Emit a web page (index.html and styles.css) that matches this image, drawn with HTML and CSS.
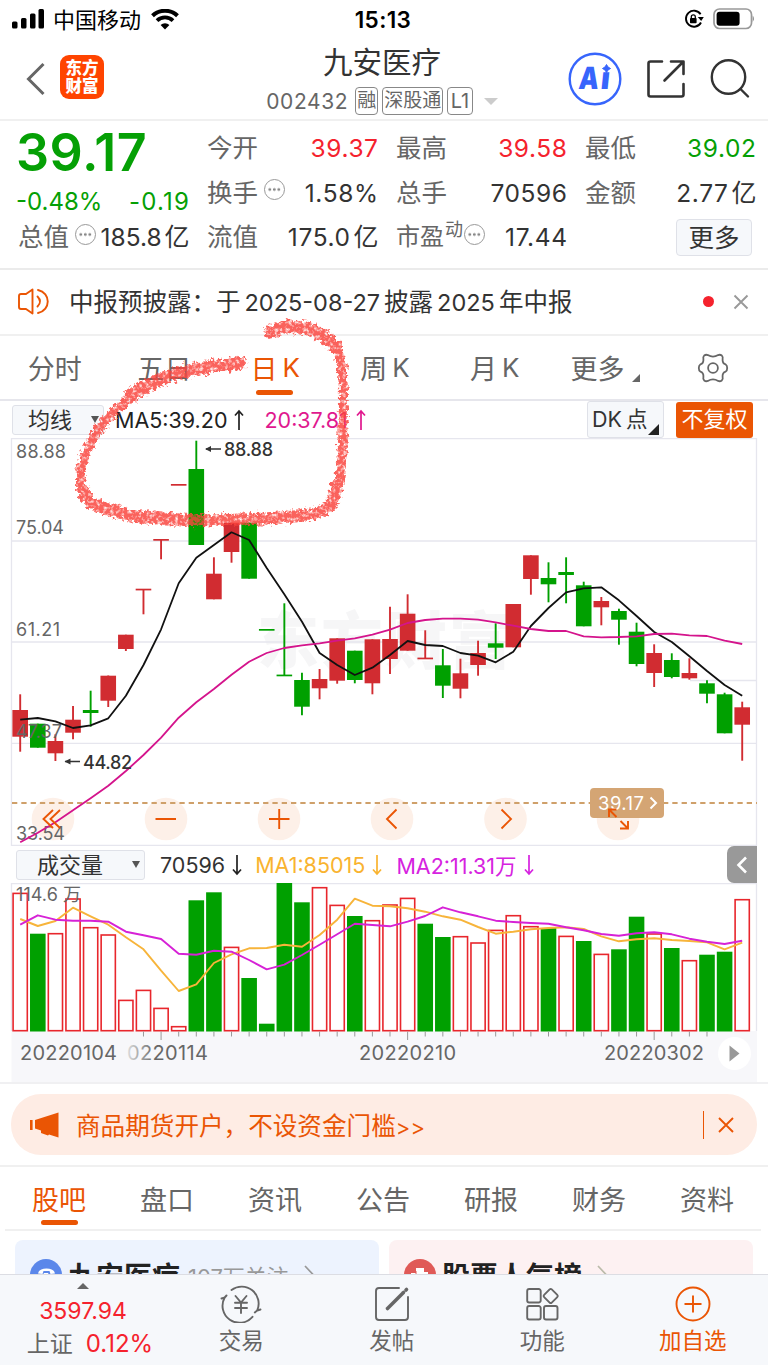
FILE: index.html
```html
<!DOCTYPE html>
<html lang="zh">
<head>
    <meta charset="UTF-8">
    <meta name="viewport" content="width=device-width, initial-scale=1.0">
    <title>九安医疗 002432</title>
    <link rel="stylesheet" href="styles.css">
</head>
<body>
<div class="page">
    <div class="status">
        <div class="carrier">
            <svg width="33" height="20" viewBox="0 0 33 20">
                <rect x="0" y="12.500" width="5.500" height="7" rx="1.500"/>
                <rect x="9" y="9" width="5.500" height="10.500" rx="1.500"/>
                <rect x="18" y="4.500" width="5.500" height="15" rx="1.500"/>
                <rect x="26.500" y="0" width="5.500" height="19.500" rx="1.500"/>
            </svg>
            <span>中国移动</span>
            <svg width="28" height="21" viewBox="0 0 28 21">
                <path d="M1.500 6.800 A18 18 0 0 1 26.500 6.800" fill="none" stroke="#000" stroke-width="4"/>
                <path d="M6 11.600 A11.500 11.500 0 0 1 22 11.600" fill="none" stroke="#000" stroke-width="3.800"/>
                <path d="M14 20.500 L9.600 16 A6.200 6.200 0 0 1 18.400 16 Z"/>
            </svg>
        </div>
        <div class="clock">15:13</div>
        <div class="battery">
            <svg width="20" height="20" viewBox="0 0 20 20">
                <path d="M16.600 5.200 A8 8 0 1 0 17 13.500" fill="none" stroke="#000" stroke-width="1.900"/>
                <path d="M13.800 8 L19.800 8 L17.200 12 Z"/>
                <rect x="6" y="9" width="6.600" height="5.200" rx=".8"/>
                <path d="M7.300 9.500 V7.800 A2 2 0 0 1 11.300 7.800 V9.500" fill="none" stroke="#000" stroke-width="1.300"/>
            </svg>
            <svg width="41" height="22" viewBox="0 0 41 22">
                <rect x="1" y="1" width="37.500" height="19.500" rx="5.500" fill="none" stroke="#999" stroke-width="1.700"/>
                <rect x="3.600" y="3.700" width="23" height="14" rx="3"/>
                <path d="M39.600 7.500 Q42.500 10.700 39.600 14 Z" fill="#999"/>
            </svg>
        </div>
    </div>

    <div class="header">
        <div class="header-left">
            <svg width="20" height="34" viewBox="0 0 20 34"><path d="M17.500 2 L2.500 17 L17.500 32" fill="none" stroke="#666" stroke-width="3"/></svg>
            <div class="logo">东方<br>财富</div>
        </div>
        <div class="header-title">
            <h1>九安医疗</h1>
            <div class="code">
                <span class="num">002432</span>
                <span class="badge">融</span>
                <span class="badge">深股通</span>
                <span class="badge level">L1</span>
                <i class="caret"></i>
            </div>
        </div>
        <div class="header-right">
            <svg width="54" height="54" viewBox="0 0 54 54">
                <circle cx="27" cy="27" r="25.300" fill="#fff" stroke="#3765fc" stroke-width="2.400"/>
                <g class="ai" transform="skewX(-6)">
                    <text x="14" y="37.500" textLength="20" lengthAdjust="spacingAndGlyphs">A</text>
                    <text x="36" y="37.500" textLength="9" lengthAdjust="spacingAndGlyphs">ı</text>
                </g>
                <path d="M38.500 12.500 Q39.500 15.500 42.500 16.500 Q39.500 17.500 38.500 20.500 Q37.500 17.500 34.500 16.500 Q37.500 15.500 38.500 12.500 Z" fill="#3765fc" stroke="#3765fc"/>
            </svg>
            <svg width="40" height="40" viewBox="0 0 40 40" fill="none" stroke="#333" stroke-width="2.600" stroke-linecap="round" stroke-linejoin="round">
                <path d="M16 2.500 H4.500 Q2.500 2.500 2.500 4.500 V35.500 Q2.500 37.500 4.500 37.500 H35.500 Q37.500 37.500 37.500 35.500 V25"/>
                <path d="M25 2.500 H37.500 V15 M37 3 L18.500 21.500"/>
            </svg>
            <svg width="40" height="40" viewBox="0 0 40 40" fill="none" stroke="#333" stroke-width="2.400" stroke-linecap="round">
                <circle cx="18.500" cy="18" r="16.700"/>
                <path d="M30.500 30 L38 37.500"/>
            </svg>
        </div>
    </div>

    <div class="quote">
        <div class="quote-main">
            <div class="price">39.17</div>
            <div class="cell down change"><span>-0.48%</span><span class="diff">-0.19</span></div>
            <div class="cell tight"><label>总值</label><i class="more-dot"></i><b>185.8<em>亿</em></b></div>
        </div>
        <div class="quote-col">
            <div class="cell"><label>今开</label><b class="up">39.37</b></div>
            <div class="cell"><label>换手</label><i class="more-dot"></i><b>1.58%</b></div>
            <div class="cell"><label>流值</label><b>175.0<em>亿</em></b></div>
        </div>
        <div class="quote-col">
            <div class="cell"><label>最高</label><b class="up">39.58</b></div>
            <div class="cell"><label>总手</label><b>70596</b></div>
            <div class="cell pe"><label>市盈<sup>动</sup></label><i class="more-dot"></i><b>17.44</b></div>
        </div>
        <div class="quote-col">
            <div class="cell"><label>最低</label><b class="down">39.02</b></div>
            <div class="cell"><label>金额</label><b>2.77<em>亿</em></b></div>
            <div class="cell"><button class="more-btn">更多</button></div>
        </div>
    </div>

    <div class="notice">
        <svg width="32" height="28" viewBox="0 0 32 28" fill="none" stroke="#ea5504" stroke-width="1.900" stroke-linecap="round" stroke-linejoin="round">
            <path d="M14.500 1.500 L8 6 H3 Q1 6 1 8 V19 Q1 21 3 21 H8 L14.500 25.500 Z"/>
            <path d="M19.500 8.500 Q24.500 13.500 19.500 18.500 M20 2 C33 5 33 22 20 25"/>
        </svg>
        <p>中报预披露：于<span class="num">2025-08-27</span>披露<span class="num">2025</span>年中报</p>
        <i class="red-dot"></i>
        <svg class="close" width="16" height="16" viewBox="0 0 16 16"><path d="M1.500 1.500 L14.500 14.500 M14.500 1.500 L1.500 14.500" stroke="#999" stroke-width="1.900"/></svg>
    </div>

    <div class="tabs">
        <span>分时</span>
        <span>五日</span>
        <span class="active">日<em>K</em></span>
        <span>周<em>K</em></span>
        <span>月<em>K</em></span>
        <span class="tab-more">更多<i class="corner"></i></span>
        <span>
            <svg width="32" height="30" viewBox="-16 -15 32 30" fill="none" stroke="#666" stroke-width="1.800" stroke-linejoin="round">
                <circle r="4.900"/>
                <path d="M-8.800 -12.500 Q-7 -13.800 -5.200 -12.900 Q0 -9.800 5.200 -12.900 Q7 -13.800 8.800 -12.500 Q10.200 -11 9.600 -9 Q9.200 -4.500 12.700 -3.600 Q14.200 -2.700 14.200 0 Q14.200 2.700 12.700 3.600 Q9.200 4.500 9.600 9 Q10.200 11 8.800 12.500 Q7 13.800 5.200 12.900 Q0 9.800 -5.200 12.900 Q-7 13.800 -8.800 12.500 Q-10.200 11 -9.600 9 Q-9.200 4.500 -12.700 3.600 Q-14.200 2.700 -14.200 0 Q-14.200 -2.700 -12.700 -3.600 Q-9.200 -4.500 -9.600 -9 Q-10.200 -11 -8.800 -12.500 Z"/>
            </svg>
        </span>
    </div>

    <div class="ma-bar">
        <div class="select">均线<i class="tri"></i></div>
        <span class="ma5">MA5:39.20</span>
        <svg class="arrow" width="10" height="22" viewBox="0 0 10 22"><path d="M5 21 V2 M1 6.500 L5 2 L9 6.500" stroke="#222"/></svg>
        <span class="ma20">20:37.81</span>
        <svg class="arrow" width="10" height="22" viewBox="0 0 10 22"><path d="M5 21 V2 M1 6.500 L5 2 L9 6.500" stroke="#e0188e"/></svg>
        <div class="dk">DK<em>点</em><i class="corner"></i></div>
        <div class="fuquan">不复权</div>
    </div>

    <svg id="kline" width="768" height="408" viewBox="0 438 768 408"></svg>

    <div class="vol-bar">
        <div class="select">成交量<i class="tri"></i></div>
        <span class="vol">70596</span>
        <svg class="arrow" width="10" height="22" viewBox="0 0 10 22"><path d="M5 1 V20 M1 15.500 L5 20 L9 15.500" stroke="#222"/></svg>
        <span class="vol-ma1">MA1:85015</span>
        <svg class="arrow" width="10" height="22" viewBox="0 0 10 22"><path d="M5 1 V20 M1 15.500 L5 20 L9 15.500" stroke="#f9b32f"/></svg>
        <span class="vol-ma2">MA2:11.31万</span>
        <svg class="arrow" width="10" height="22" viewBox="0 0 10 22"><path d="M5 1 V20 M1 15.500 L5 20 L9 15.500" stroke="#d622e0"/></svg>
        <div class="fold"><svg width="12" height="18" viewBox="0 0 12 18"><path d="M10 1.500 L2.500 9 L10 16.500" fill="none" stroke="#fff" stroke-width="2.600"/></svg></div>
    </div>

    <svg id="volume" width="768" height="199" viewBox="0 883 768 199"></svg>

    <div class="banner-wrap">
        <div class="banner">
            <svg width="29" height="26" viewBox="0 0 29 26" fill="#ea5504">
                <rect x="0" y="8" width="2.600" height="10"/>
                <path d="M5 8 L28.500 .5 V25.500 L19 22.500 L18 23.500 L11 21 V18.500 L5 16.500 Z"/>
            </svg>
            <p>商品期货开户，不设资金门槛<span>&gt;&gt;</span></p>
            <i class="bar"></i>
            <svg width="16" height="16" viewBox="0 0 16 16"><path d="M1 1 L15 15 M15 1 L1 15" stroke="#ea5504" stroke-width="1.900"/></svg>
        </div>
    </div>

    <div class="tabs tabs-info">
        <span class="active">股吧</span>
        <span>盘口</span>
        <span>资讯</span>
        <span>公告</span>
        <span>研报</span>
        <span>财务</span>
        <span>资料</span>
    </div>

    <div class="cards">
        <div class="card card-blue">
            <svg width="32" height="32" viewBox="0 0 32 32">
                <circle cx="16" cy="16" r="16" fill="#5b87ea"/>
                <path d="M8 14.500 Q9 9.500 16.500 9.500 Q24 9.500 25 14.500 L20.500 15 L19.500 12 H13.500 L12.500 15 Z M14 14 H18 L22 21 H10 Z" fill="#fff"/>
            </svg>
            <strong>九安医疗</strong>
            <span>107万关注</span>
            <svg width="12" height="22" viewBox="0 0 12 22"><path d="M2 2 L10.500 11 L2 20" fill="none" stroke="#999" stroke-width="1.700"/></svg>
        </div>
        <div class="card card-red">
            <svg width="32" height="32" viewBox="0 0 32 32">
                <circle cx="16" cy="16" r="16" fill="#e05a57"/>
                <path d="M7 14 H12 V9 H20 V13 H24 V22 H7 Z" fill="#fff"/>
                <path d="M12 12 V22" stroke="#e05a57"/>
            </svg>
            <strong>股票人气榜</strong>
            <svg width="12" height="22" viewBox="0 0 12 22"><path d="M2 2 L10.500 11 L2 20" fill="none" stroke="#bba" stroke-width="1.700"/></svg>
        </div>
    </div>

    <div class="footer">
        <div class="index">
            <i class="tri-up"></i>
            <b>3597.94</b>
            <p>上证<b>0.12%</b></p>
        </div>
        <div class="item">
            <svg width="42" height="38" viewBox="-21 -19 42 38" fill="none" stroke="#666" stroke-width="1.900" stroke-linecap="round">
                <path d="M-9.500 -14 A17 17 0 0 1 16.200 6.500 L13.800 8.500 M16.200 6.500 L19.500 5.500"/>
                <path d="M11.500 12.800 A17 17 0 0 1 -16.300 -6.500 L-19.500 -5.500 M-16.300 -6.500 L-14.500 -8.500"/>
                <path d="M-5.500 -8 L0 -1.500 L5.500 -8 M0 -1.500 V9 M-6 -1.300 H6 M-6 4 H6"/>
            </svg>
            <p>交易</p>
        </div>
        <div class="item">
            <svg width="38" height="38" viewBox="-19 -19 38 38" fill="none" stroke="#666" stroke-width="1.900" stroke-linecap="round">
                <path d="M7 -16 H-13 Q-16 -16 -16 -13 V13 Q-16 16 -13 16 H13 Q16 16 16 13 V-7"/>
                <path d="M-4.500 4.500 L11.500 -11.500" stroke-width="3.600"/>
                <path d="M14 -14 L14.500 -14.500" stroke-width="3.600"/>
            </svg>
            <p>发帖</p>
        </div>
        <div class="item">
            <svg width="38" height="38" viewBox="-19 -19 38 38" fill="none" stroke="#666" stroke-width="1.900" stroke-linejoin="round">
                <rect x="-14.800" y="-15" width="13.500" height="13.500" rx="2"/>
                <rect x="-14.800" y="2" width="13.500" height="13.500" rx="2"/>
                <rect x="2" y="2" width="13.500" height="13.500" rx="2"/>
                <rect x="3.300" y="-13.400" width="10.800" height="10.800" rx="1.500" transform="rotate(45 8.700 -8)"/>
            </svg>
            <p>功能</p>
        </div>
        <div class="item add">
            <svg width="38" height="38" viewBox="-19 -19 38 38" fill="none" stroke="#ea5504" stroke-width="1.900">
                <circle r="16.500"/>
                <path d="M-8.500 0 H8.500 M0 -8.500 V8.500"/>
            </svg>
            <p>加自选</p>
        </div>
    </div>

    <!-- 手绘圈注 -->
    <svg class="mark" width="768" height="1366" viewBox="0 0 768 1366">
        <defs>
            <filter id="crayon" x="60" y="310" width="310" height="225" filterUnits="userSpaceOnUse">
                <feTurbulence type="fractalNoise" baseFrequency=".28" numOctaves="3" seed="4" result="n"/>
                <feDisplacementMap in="SourceGraphic" in2="n" scale="10" xChannelSelector="R" yChannelSelector="G" result="d"/>
                <feColorMatrix in="n" type="matrix" values="0 0 0 0 0  0 0 0 0 0  0 0 0 0 0  0 0 2.500 0 -.3" result="m"/>
                <feComposite in="d" in2="m" operator="in"/>
                <feGaussianBlur stdDeviation=".6"/>
            </filter>
        </defs>
        <g filter="url(#crayon)" fill="none" stroke="#fa443c" stroke-linecap="round" stroke-linejoin="round" opacity=".84">
            <path d="M270 332 Q285 324 305 328 Q325 333 337 349" stroke-width="13"/>
            <path d="M332 341 C345 355 344 395 343 425 C342 470 340 490 332 505" stroke-width="9"/>
            <path d="M337 485 C332 510 324 514 300 516 C250 520 180 523 130 515 C95 508 84 500 82 488" stroke-width="12"/>
            <path d="M82 492 C77 470 86 445 103 424 C120 402 150 384 180 373" stroke-width="9.500"/>
            <path d="M130 395 C165 372 200 367 240 363" stroke-width="12.500"/>
        </g>
    </svg>
</div>
<script src="chart.js"></script>
</body>
</html>
```

FILE: styles.css
```css
* {
    box-sizing: border-box;
}
body {
    margin: 0;
    background: #fff;
    color: #333;
    font-family: Inter, "Noto Sans CJK SC", sans-serif;
    font-weight: 400;
}
p, h1 {
    margin: 0;
    font-weight: 400;
}
i, em {
    font-style: normal;
}
b {
    font-weight: 400;
}
svg {
    display: block;
    flex: none;
}
.page {
    position: relative;
    width: 768px;
    height: 1366px;
    overflow: hidden;
    white-space: nowrap;
}
.up {
    color: #f5222d;
}
.down {
    color: #05a005;
}

/* 状态栏 */
.status {
    display: flex;
    height: 38px;
    align-items: center;
    padding: 0 14px 0 12px;
    color: #000;
}
.carrier, .battery {
    flex: 1;
    display: flex;
    align-items: center;
    font-size: 22px;
}
.carrier span {
    margin: 0 10px 0 8px;
    padding-bottom: 2px;
}
.clock {
    font-size: 22.500px;
    font-weight: 600;
    letter-spacing: 0.400px;
}
.battery {
    justify-content: flex-end;
    gap: 9px;
}

/* 头部 */
.header {
    display: flex;
    height: 83px;
    border-bottom: 2px solid #f0f0f0;
    padding: 0 18px 0 14px;
}
.header-left, .header-right {
    flex: 1;
    display: flex;
    align-items: center;
}
.header-left {
    gap: 14px;
}
.header-left svg {
    margin-left: 12px;
}
.header-right {
    justify-content: flex-end;
    gap: 24px;
}
.logo {
    width: 44px;
    height: 44px;
    border-radius: 9px;
    background: #ff4400;
    color: #fff;
    font-size: 16.500px;
    font-weight: 900;
    line-height: 18px;
    margin-bottom: 3px;
    padding-top: 4px;
    text-align: center;
}
.header-title {
    display: flex;
    flex-direction: column;
    align-items: center;
}
.header-title h1 {
    font-size: 29.500px;
    line-height: 48px;
}
.code {
    display: flex;
    align-items: center;
    color: #666;
    height: 30px;
}
.code .num {
    font-size: 21px;
    letter-spacing: 0.600px;
    margin-right: 7px;
}
.badge {
    height: 28px;
    border: 1.500px solid #888;
    border-radius: 4px;
    font-size: 19px;
    line-height: 26px;
    padding: 0 1px;
    margin-right: 4px;
}
.badge.level {
    font-size: 20px;
    padding: 0 2.500px;
}
.caret {
    border: 7px solid transparent;
    border-top-color: #ccc;
    border-bottom: 0;
    margin-left: 7px;
}
.ai text {
    font-size: 30.500px;
    font-weight: 900;
    fill: #3765fc;
}

/* 行情 */
.quote {
    display: grid;
    grid-template-columns: 171px 171px 171px 171px;
    column-gap: 18px;
    height: 149px;
    padding: 5px 12px 0 18px;
    border-bottom: 2px solid #ebebeb;
}
.cell {
    display: flex;
    align-items: center;
    height: 44.500px;
    line-height: 30px;
}
.cell label {
    font-size: 25.500px;
    color: #666;
}
.cell b {
    margin-left: auto;
    font-size: 24.500px;
    letter-spacing: 0.600px;
    margin-right: -0.600px;
}
.cell em {
    font-size: 25px;
    line-height: 0;
    margin-left: 3px;
    letter-spacing: 0;
}
.price {
    height: 56px;
    margin-left: -2px;
    font-size: 52px;
    line-height: 53px;
    letter-spacing: 0.500px;
    font-weight: 600;
    color: #05a005;
}
.change {
    height: 33px;
    justify-content: space-between;
    font-size: 24px;
    padding-top: 6px;
    margin-left: -2px;
}
.diff {
    letter-spacing: 1.200px;
    margin-right: -1px;
}
.tight b {
    letter-spacing: 0;
}
.more-dot {
    width: 21px;
    height: 21px;
    border: 1.500px solid #999;
    border-radius: 50%;
    background: radial-gradient(circle, #888 1.200px, transparent 1.700px) 50% 50% / 4.500px 18px;
    background-clip: content-box;
    padding: 0 2.200px;
    margin: 0 0 6px 6px;
}
.pe .more-dot {
    margin-left: 1px;
}
.pe label {
    font-size: 24px;
}
.pe sup {
    font-size: 18px;
    line-height: 0;
    margin-left: 1px;
}
.more-btn {
    width: 76px;
    height: 37px;
    margin-left: auto;
    margin-right: 4px;
    border: 1.500px solid #dfe1e8;
    border-radius: 4px;
    background: #f6f8fb;
    color: #333;
    font: 25.500px/31px "Noto Sans CJK SC", sans-serif;
    padding: 0 0 3px;
}

/* 公告 */
.notice {
    display: flex;
    align-items: center;
    height: 66px;
    padding: 0 19px 1px 18px;
    border-bottom: 2px solid #f0f0f0;
}
.notice p {
    margin-left: 19px;
    padding-bottom: 2px;
    font-size: 24.500px;
}
.notice .num {
    font-size: 23.500px;
    margin: 0 4px;
}
.red-dot {
    width: 11px;
    height: 11px;
    border-radius: 50%;
    background: #f5222d;
    margin-left: auto;
    margin-right: 19px;
}

/* 周期切换 */
.tabs {
    display: flex;
    height: 65px;
    border-bottom: 2px solid #e6e6ec;
}
.tabs span {
    flex: 1 1 0;
    display: flex;
    align-items: center;
    justify-content: center;
    position: relative;
    font-size: 27px;
    color: #666;
}
.tabs em {
    margin-left: 5px;
    margin-right: -2px;
    font-size: 26px;
}
.tabs .active {
    color: #ea5504;
}
.tabs .active::after {
    content: "";
    position: absolute;
    bottom: 4px;
    width: 37px;
    height: 5px;
    border-radius: 3px;
    background: #ea5504;
}
.corner {
    border-left: 8px solid transparent;
    border-bottom: 8px solid #666;
}
.tab-more .corner {
    margin: 20px -4px 0 8px;
}

/* 指标条 */
.ma-bar, .vol-bar {
    display: flex;
    align-items: center;
    font-size: 21.500px;
}
.ma-bar {
    height: 37px;
    padding: 0 15px 0 12px;
}
.select {
    display: flex;
    align-items: center;
    justify-content: space-between;
    width: 92px;
    height: 30px;
    border: 1.500px solid #dfe1e8;
    border-radius: 3px;
    background: #f6f8fb;
    padding: 0 4px 0 15px;
    font-size: 22px;
    line-height: 26px;
}
.tri {
    border: 4.500px solid transparent;
    border-top: 7px solid #555;
    border-bottom: 0;
}
.arrow {
    fill: none;
    stroke-width: 1.700px;
}
.ma5 {
    color: #222;
    margin: 0 7px 0 11px;
}
.ma20 {
    color: #e0188e;
    margin: 0 8px 0 20px;
}
.dk {
    position: relative;
    width: 77px;
    height: 37px;
    margin-left: auto;
    border: 1.500px solid #dfe1e8;
    border-radius: 3px;
    background: #f6f8fb;
    line-height: 34px;
    padding-left: 4px;
}
.dk em {
    margin-left: 4px;
}
.dk .corner {
    position: absolute;
    right: 4px;
    bottom: 2px;
    border-left-width: 11px;
    border-bottom: 11px solid #222;
}
.fuquan {
    width: 77px;
    height: 36px;
    margin-left: 12px;
    border-radius: 3px;
    background: #ea5504;
    color: #fff;
    font-size: 22px;
    line-height: 34px;
    text-align: center;
}
.vol-bar {
    height: 37px;
    padding: 0 11px 0 16px;
}
.vol-bar .select {
    width: 129px;
    padding-left: 20px;
}
.vol {
    margin: 0 7px 0 15px;
}
.vol-ma1 {
    color: #f9b32f;
    margin: 0 7px 0 13px;
}
.vol-ma2 {
    color: #d622e0;
    margin: 0 7px 0 14px;
}
.fold {
    display: flex;
    align-items: center;
    justify-content: center;
    width: 30px;
    height: 37px;
    margin-left: auto;
    border-radius: 7px 0 0 7px;
    background: #999;
}

/* 图表 */
.axis {
    font-size: 18px;
    fill: #666;
}
.tip {
    font-size: 18px;
    font-weight: 500;
    fill: #333;
}
.date {
    font-size: 20px;
    fill: #666;
}
.tag {
    font-size: 18.500px;
    fill: #fff;
}
.watermark {
    font-size: 62px;
    font-weight: 900;
    fill: #f6f6f7;
}

/* 广告条 */
.banner-wrap {
    height: 85px;
    padding: 10px 11px 0;
    border-top: 2px solid #f0f0f2;
    border-bottom: 2px solid #f0f0f0;
}
.banner {
    display: flex;
    align-items: center;
    height: 61px;
    border-radius: 30px;
    background: #feece4;
    padding: 0 23px 0 19px;
    color: #ea5504;
}
.banner p {
    margin-left: 17px;
    padding-bottom: 2px;
    font-size: 24.600px;
}
.banner p span {
    font-size: 22px;
    letter-spacing: 0.300px;
}
.bar {
    width: 1.500px;
    height: 28px;
    background: #ea5504;
    margin-left: auto;
    margin-right: 14px;
}

/* 资讯 */
.tabs-info {
    height: 64px;
    margin: 0 7px 0 5px;
    border-color: #f0f0f0;
}
.cards {
    display: flex;
    gap: 10px;
    height: 43px;
    padding: 9px 15px 0;
    overflow: hidden;
}
.card {
    flex: 1;
    display: flex;
    align-items: center;
    height: 69px;
    border-radius: 8px;
    padding: 0 15px;
}
.card-blue {
    background: #edf3fe;
}
.card-red {
    background: #fdf1f2;
}
.card strong {
    font-size: 28px;
    margin-left: 6px;
    font-weight: 700;
    color: #222;
}
.card span {
    font-size: 22px;
    color: #999;
    margin: 0 14px 0 8px;
}
.card-red svg + strong + svg {
    margin-left: 14px;
}

/* 底部导航 */
.footer {
    display: flex;
    height: 91px;
    border-top: 1.500px solid #dcdde3;
    background: #f6f8fb;
    color: #666;
}
.index {
    width: 166px;
    text-align: center;
    font-size: 23px;
    line-height: 33px;
}
.index b {
    color: #f5222d;
}
.index p {
    padding-left: 14px;
    line-height: 32px;
}
.index p b {
    margin-left: 13px;
    font-size: 24px;
}
.tri-up {
    display: block;
    width: 0;
    margin: 8px auto 6px;
    border: 6.500px solid transparent;
    border-bottom-color: #666;
    border-top: 0;
}
.item {
    flex: 1;
    display: flex;
    flex-direction: column;
    align-items: center;
    padding-top: 10px;
    font-size: 22.500px;
    line-height: 36px;
}
.add {
    color: #ea5504;
}

.mark {
    position: absolute;
    left: 0;
    top: 0;
    pointer-events: none;
}
```

FILE: chart.js
```js
const RED = '#d12c31';
const GREEN = '#00a000';

// 涨跌, 最高, 实体上沿, 实体下沿, 最低
const candles = [
    [1, 694.3, 710, 736.7, 751.7], [0, 723.7, 723.7, 747.7, 747.7], [1, 734.3, 741, 753.3, 761],
    [1, 706, 719.7, 732.7, 739.3], [0, 690.7, 710, 713, 726.7], [1, 675.5, 675.7, 700.7, 707],
    [1, 634.7, 634.7, 649, 651], [1, 589, 588.7, 590.4, 614.3], [1, 539, 539, 540.7, 559.3],
    [1, 484, 484, 485.7, 485], [0, 440.7, 469, 545, 545], [1, 557.3, 573.7, 599.3, 599.3],
    [1, 522.7, 522.7, 552, 562.7], [0, 522.7, 522.7, 578.7, 578.7], [0, 629, 629, 630.7, 630],
    [0, 603.3, 674.6, 676.3, 676], [0, 672.7, 680, 706.7, 715.3], [1, 669, 679, 688.3, 699.3],
    [1, 638.3, 638.3, 680.7, 683.7], [0, 650.7, 650.7, 680, 683.3], [1, 639.3, 639.3, 683.3, 694.3],
    [1, 606.7, 639, 659, 674], [1, 594.3, 613.7, 650.7, 650.7], [1, 630.3, 657.6, 659.3, 659],
    [0, 649, 665.3, 685.7, 698], [1, 658.7, 673.3, 688.7, 698.3], [1, 640.7, 653, 665, 675.7],
    [0, 623.3, 643.3, 647.7, 659], [1, 604, 604, 647.3, 647.3], [1, 555.3, 555.3, 579, 594.7],
    [0, 562.3, 578, 584.3, 602.3], [0, 557.3, 572, 575, 603.3], [0, 581.7, 585.3, 626.3, 626.3],
    [1, 597, 601, 607.3, 625.3], [0, 608.7, 611, 619.7, 644.7], [0, 622.7, 631.7, 664, 666.3],
    [1, 644.3, 653, 673, 687], [0, 653.3, 660, 677, 678.3], [1, 658.3, 673, 678.3, 679.7],
    [0, 680.3, 683.3, 693.7, 703.3], [0, 692.7, 694.3, 733.3, 733.3], [1, 701.7, 707.3, 724.7, 760.7]
];
const ma5 = [719.7, 718, 721.3, 728, 725.3, 718.3, 695.7, 665, 629.3, 583.3, 557.7, 545, 532.3, 540,
    568, 594.3, 621.7, 653, 665, 675, 667.7, 655, 641, 645, 646, 653, 655.7, 662.3, 651.7, 626, 608,
    592.3, 588.3, 587.3, 600.3, 616, 632, 642, 656.3, 671, 685, 695.7];
const ma20 = [842.3, 832.7, 822.3, 810.3, 798.3, 785.7, 771, 755, 737.7, 717.7, 702.3, 689, 674.7, 661.7,
    653, 648, 645.3, 643.3, 640.7, 638.3, 634.7, 629.7, 623, 620, 618.7, 618.7, 619.7, 622.3, 625.7, 629,
    631, 631, 636.3, 637.3, 637, 636.3, 634, 633.7, 635.3, 636, 640.7, 644];

const volTop = [892.7, 933.7, 933, 898.3, 927, 934.3, 999.7, 989.7, 1007.7, 1026, 900.3, 892.3, 946.7, 978,
    1023.7, 883, 902.3, 887, 904.7, 916, 920, 904.3, 897.7, 923.7, 937, 936, 942.3, 929.7, 915, 926, 928,
    935.7, 941, 953.7, 949.3, 916.7, 933.3, 948, 960, 954.7, 951.7, 899];
const volGreen = [1, 10, 11, 13, 14, 15, 16, 19, 23, 24, 30, 32, 34, 35, 37, 39, 40];
const volMa1 = [919, 926, 921, 907.7, 916.3, 924.7, 937.3, 949.3, 970.7, 991, 984.3, 963, 954.3, 948.3, 948,
    944.7, 946.7, 935, 919.7, 898.7, 905.7, 906.3, 908.3, 911.7, 916.3, 919.7, 927, 933.7, 931.7, 929.3,
    928, 927.3, 929, 936.3, 941.3, 939.3, 938.3, 940, 941, 942.3, 949.3, 942.7];
const volMa2 = [924.7, 915.3, 919.7, 920.7, 920.7, 921.7, 931.7, 935.3, 939, 953.7, 954.7, 950.7, 951.7, 960,
    969.3, 964.7, 955, 944.7, 934.3, 923.7, 925, 926.3, 921.7, 916, 907.3, 912.3, 916.3, 920.7, 922, 923,
    923.7, 927.3, 930.3, 934, 935.7, 933.3, 932.3, 934.3, 938.7, 941.7, 944, 940.7];

const cx = i => 20.2 + i * 17.61;

function polyline(data, color, width) {
    const pts = data.map((y, i) => cx(i).toFixed(1) + ',' + y).join(' ');
    return `<polyline points="${pts}" fill="none" stroke="${color}" stroke-width="${width}" stroke-linejoin="round"/>`;
}

function hline(y, x1, x2, color) {
    return `<path d="M${x1} ${y} H${x2}" stroke="${color || '#e6e6ee'}" stroke-width="1.3"/>`;
}

function text(cls, x, y, str, len) {
    return `<text class="${cls}" x="${x}" y="${y}" textLength="${len}">${str}</text>`;
}

function drawKline() {
    let s = '<text class="watermark" x="257" y="664" textLength="254">东方财富</text>';
    s += hline(438.5, 11, 757) + hline(541, 11, 757) + hline(642, 11, 757) + hline(680.5, 690, 757) + hline(743.3, 11, 757) + hline(845.5, 11, 757);
    s += '<path d="M11.5 438 V846 M756.5 438 V846" stroke="#e6e6ee" stroke-width="1.3"/>';
    [53, 166, 279, 392, 505.5, 618].forEach(x => {
        s += `<circle cx="${x}" cy="819" r="21.3" fill="#fdf0e8"/>`;
    });
    s += '<path d="M12 803 H757" stroke="#cfa06a" stroke-width="1.8" stroke-dasharray="5.3 4"/>';

    candles.forEach((c, i) => {
        const color = c[0] ? RED : GREEN;
        const x = cx(i);
        s += `<path d="M${x} ${c[1]} V${c[4]}" stroke="${color}" stroke-width="1.9"/>`;
        s += `<rect x="${x - 7.8}" y="${c[2]}" width="15.6" height="${c[3] - c[2]}" fill="${color}"/>`;
    });

    s += text('axis', 16, 457.5, '88.88', 50);
    s += text('axis', 16, 533.5, '75.04', 48);
    s += text('axis', 16, 635.5, '61.21', 44);
    s += text('axis', 16, 737.5, '47.37', 46);
    s += text('axis', 16, 839.5, '33.54', 49);

    s += polyline(ma5, '#111', 1.8) + polyline(ma20, '#d4148c', 1.8);

    s += '<path d="M206 449 H221 M65 761.5 H80" stroke="#333" stroke-width="1.7"/>';
    s += '<path d="M205 449 L211 446 V452 Z M64.5 761.5 L70.5 758.5 V764.5 Z" fill="#333"/>';
    s += text('tip', 224, 456, '88.88', 49) + text('tip', 83, 768.5, '44.82', 49);

    s += '<rect x="590" y="788" width="74" height="30" rx="4" fill="#d4a574"/>';
    s += text('tag', 598, 810, '39.17', 46);
    s += '<path d="M650.5 797.5 L656 803 L650.5 808.5" fill="none" stroke="#fff" stroke-width="2"/>';

    s += '<g fill="none" stroke="#ea5504" stroke-width="1.9">';
    s += '<path d="M53 810 L43.5 819 L53 828 M60 810 L50.5 819 L60 828"/>';
    s += '<path d="M155.5 819 H176 M269 819 H289.5 M279.2 809 V829"/>';
    s += '<path d="M396.5 809.5 L387 819 L396.5 828.5 M501.5 809.5 L511 819 L501.5 828.5"/>';
    s += '<path d="M609 817 V809.5 H616.5 M609.5 810 L616.5 817 M620 828.5 H628 V821 M620.5 821 L627.5 828"/>';
    s += '</g>';
    document.getElementById('kline').innerHTML = s;
}

function drawVolume() {
    let s = '<rect x="11.5" y="1031" width="745.5" height="51" fill="#f7f7fa"/>';
    s += '<path d="M11.5 883 V1031 M756.5 883 V1031" stroke="#e6e6ee" stroke-width="1.3"/>' + hline(883.5, 11, 757);
    volTop.forEach((y, i) => {
        const x = cx(i);
        if (volGreen.includes(i)) {
            s += `<rect x="${x - 7.8}" y="${y}" width="15.6" height="${1031.5 - y}" fill="${GREEN}"/>`;
        } else {
            s += `<rect x="${x - 7.1}" y="${y + .7}" width="14.2" height="${1030 - y}" fill="#fff" stroke="#e8262c" stroke-width="1.6"/>`;
        }
        if (i > 6 && i < 40) {
            const long = i % 14 === 8;
            s += `<path d="M${x} 1031.5 V${long ? 1040 : 1036.5}" stroke="#999" stroke-width="1"/>`;
        }
    });
    s += text('axis', 16, 900.7, '114.6 万', 65);
    s += polyline(volMa1, '#f7b43a', 1.9) + polyline(volMa2, '#d622d6', 1.9);

    s += '<defs><linearGradient id="fade"><stop offset="0" stop-color="#ddd"/><stop offset=".35" stop-color="#666"/></linearGradient></defs>';
    s += text('date', 20, 1060.3, '20220104', 97);
    s += '<g fill="url(#fade)"><text font-size="20" x="127" y="1060.3" textLength="81">0220114</text></g>';
    s += text('date', 359, 1060.3, '20220210', 97);
    s += text('date', 604, 1060.3, '20220302', 100);
    s += '<circle cx="734.5" cy="1053.5" r="16.5" fill="#fff"/><path d="M729.5 1045.5 V1061.5 L739.5 1053.5 Z" fill="#999"/>';
    document.getElementById('volume').innerHTML = s;
}

drawKline();
drawVolume();
```
